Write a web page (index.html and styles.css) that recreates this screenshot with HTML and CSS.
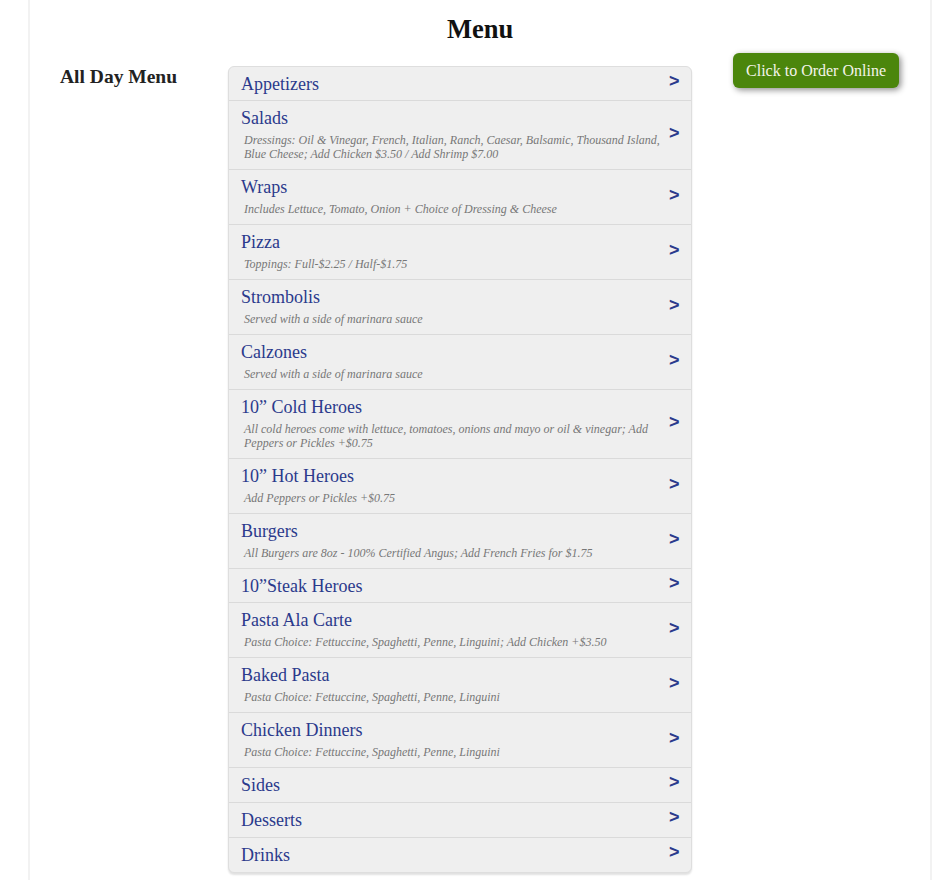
FILE: index.html
```html
<!DOCTYPE html>
<html>
<head>
<meta charset="utf-8">
<title>Menu</title>
<link rel="stylesheet" href="styles.css">
</head>
<body>
<div class="page">
  <h1 class="page-title">Menu</h1>
  <div class="main">
    <div class="sidebar">All Day Menu</div>
    <div class="menu-list">
      <div class="row"><div class="text"><div class="name">Appetizers</div></div><span class="chev">&gt;</span></div>
      <div class="row"><div class="text"><div class="name">Salads</div><div class="desc">Dressings: Oil &amp; Vinegar, French, Italian, Ranch, Caesar, Balsamic, Thousand Island, Blue Cheese; Add Chicken $3.50 / Add Shrimp $7.00</div></div><span class="chev">&gt;</span></div>
      <div class="row"><div class="text"><div class="name">Wraps</div><div class="desc">Includes Lettuce, Tomato, Onion + Choice of Dressing &amp; Cheese</div></div><span class="chev">&gt;</span></div>
      <div class="row"><div class="text"><div class="name">Pizza</div><div class="desc">Toppings: Full-$2.25 / Half-$1.75</div></div><span class="chev">&gt;</span></div>
      <div class="row"><div class="text"><div class="name">Strombolis</div><div class="desc">Served with a side of marinara sauce</div></div><span class="chev">&gt;</span></div>
      <div class="row"><div class="text"><div class="name">Calzones</div><div class="desc">Served with a side of marinara sauce</div></div><span class="chev">&gt;</span></div>
      <div class="row"><div class="text"><div class="name">10” Cold Heroes</div><div class="desc">All cold heroes come with lettuce, tomatoes, onions and mayo or oil &amp; vinegar; Add Peppers or Pickles +$0.75</div></div><span class="chev">&gt;</span></div>
      <div class="row"><div class="text"><div class="name">10” Hot Heroes</div><div class="desc">Add Peppers or Pickles +$0.75</div></div><span class="chev">&gt;</span></div>
      <div class="row"><div class="text"><div class="name">Burgers</div><div class="desc">All Burgers are 8oz - 100% Certified Angus; Add French Fries for $1.75</div></div><span class="chev">&gt;</span></div>
      <div class="row"><div class="text"><div class="name">10”Steak Heroes</div></div><span class="chev">&gt;</span></div>
      <div class="row"><div class="text"><div class="name">Pasta Ala Carte</div><div class="desc">Pasta Choice: Fettuccine, Spaghetti, Penne, Linguini; Add Chicken +$3.50</div></div><span class="chev">&gt;</span></div>
      <div class="row"><div class="text"><div class="name">Baked Pasta</div><div class="desc">Pasta Choice: Fettuccine, Spaghetti, Penne, Linguini</div></div><span class="chev">&gt;</span></div>
      <div class="row"><div class="text"><div class="name">Chicken Dinners</div><div class="desc">Pasta Choice: Fettuccine, Spaghetti, Penne, Linguini</div></div><span class="chev">&gt;</span></div>
      <div class="row"><div class="text"><div class="name">Sides</div></div><span class="chev">&gt;</span></div>
      <div class="row"><div class="text"><div class="name">Desserts</div></div><span class="chev">&gt;</span></div>
      <div class="row"><div class="text"><div class="name">Drinks</div></div><span class="chev">&gt;</span></div>
    </div>
    <div class="order">
      <a class="order-btn" href="#">Click to Order Online</a>
    </div>
  </div>
</div>
</body>
</html>
```
FILE: styles.css
```css
html, body {
  margin: 0;
  padding: 0;
  background: #fff;
}
body {
  font-family: "Liberation Serif", "Times New Roman", serif;
  color: #222;
}
.page {
  margin: 0 28px;
  width: 900px;
  min-height: 880px;
  border-left: 2px solid #f2f2f2;
  border-right: 2px solid #f2f2f2;
}
.page-title {
  margin: 0;
  padding-top: 13px;
  font-size: 26.5px;
  line-height: 32px;
  font-weight: bold;
  text-align: center;
  color: #111;
}
.main {
  display: grid;
  grid-template-columns: 168px 505px 166px;
  padding-left: 30px;
  margin-top: 8px;
  align-items: start;
}
.sidebar {
  margin-top: 13px;
  font-size: 19.5px;
  line-height: 22px;
  font-weight: bold;
  color: #222;
}
.menu-list {
  margin-top: 13px;
  margin-right: 41px;
  background: #efefef;
  border: 1px solid #dedede;
  border-radius: 6px;
  box-shadow: 0 2px 2px rgba(0,0,0,0.12);
}
.row {
  display: flex;
  align-items: center;
  padding: 7px 8px 6px 12px;
  border-top: 1px solid #dadada;
}
.row:first-child {
  border-top: none;
}
.row:nth-last-child(-n+3) {
  padding-bottom: 7px;
}
.text {
  flex: 1;
  min-width: 0;
  padding-right: 4px;
}
.name {
  font-size: 18px;
  line-height: 20px;
  color: #2b3a8c;
}
.desc {
  margin-top: 5px;
  margin-bottom: 2px;
  padding-left: 3px;
  font-size: 12px;
  line-height: 14px;
  font-style: italic;
  color: #777;
}
.chev {
  flex: none;
  width: 14px;
  margin-top: -6px;
  font-family: "Liberation Sans", Arial, sans-serif;
  font-weight: bold;
  font-size: 18px;
  line-height: 20px;
  color: #2b3a8c;
}
.order {
  display: flex;
}
.order-btn {
  display: block;
  width: 166px;
  height: 35px;
  line-height: 35px;
  text-align: center;
  font-size: 16px;
  color: #f4f4ea;
  text-decoration: none;
  background: #4b860c;
  border-radius: 6px;
  box-shadow: 2px 2px 6px rgba(0,0,0,0.45);
}
```
